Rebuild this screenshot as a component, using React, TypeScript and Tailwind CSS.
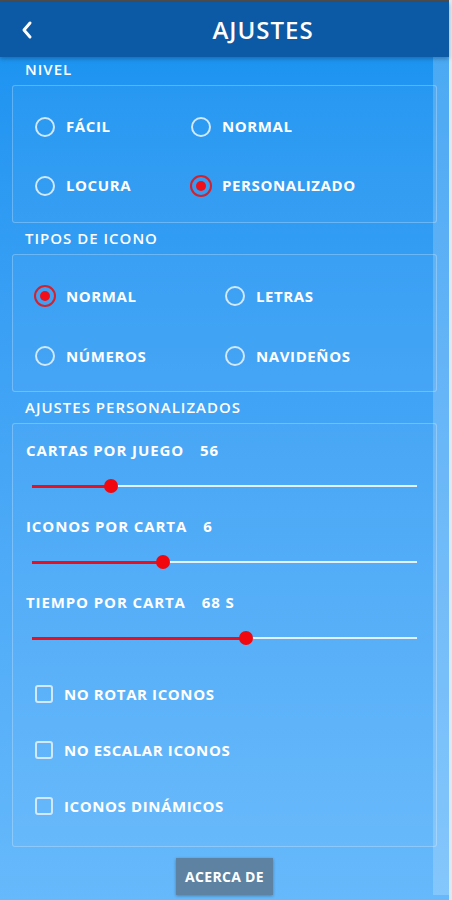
import React from "react";

const font = "font-['Open_Sans','Liberation_Sans',sans-serif]";

const Radio = ({ label, checked }: { label: string; checked?: boolean }) => (
  <div className="flex items-center gap-[11px]">
    {checked ? (
      <span className="flex h-[22px] w-[22px] items-center justify-center rounded-full border-2 border-[#d3222c] -mx-[1px]">
        <span className="h-[10px] w-[10px] rounded-full bg-[#f10f1a]" />
      </span>
    ) : (
      <span className="h-[20px] w-[20px] rounded-full border-2 border-[#d2e8fd]" />
    )}
    <span className="text-[15px] font-bold text-white tracking-[0.6px]">{label}</span>
  </div>
);

const SectionLabel = ({ children, first }: { children: string; first?: boolean }) => (
  <div className={`h-[24px] pl-[13px] mb-1 flex items-center text-[15px] font-semibold tracking-[1px] text-white ${first ? "" : "mt-[3px]"}`}>
    {children}
  </div>
);

const Slider = ({ label, value, pct }: { label: string; value: string; pct: number }) => (
  <div>
    <div className="h-[20px] flex items-center pl-[13px] text-[15px] font-bold tracking-[0.9px] text-white">
      <span>{label}</span>
      <span className="ml-[16px]">{value}</span>
    </div>
    <div className="relative mt-[16px] h-[20px] ml-[19px] mr-[19px] flex items-center">
      <div className="h-[2px] w-full bg-[#e3f1fd]" />
      <div className="absolute left-0 h-[3px] bg-[#e8101e]" style={{ width: `${pct}%` }} />
      <div
        className="absolute h-[14px] w-[14px] -ml-[7px] rounded-full bg-[#f2070f]"
        style={{ left: `${pct}%` }}
      />
    </div>
  </div>
);

const Check = ({ label }: { label: string }) => (
  <div className="h-[20px] flex items-center gap-[11px] pl-[22px]">
    <span className="h-[18px] w-[18px] rounded-[3px] border-2 border-[#d2e8fd]" />
    <span className="text-[15px] font-bold tracking-[0.6px] text-white">{label}</span>
  </div>
);

export default function App() {
  return (
    <div className={`flex h-[900px] w-[452px] overflow-hidden bg-[#dfe7ef] ${font}`}>
      <div className="relative flex w-[449px] flex-col">
        <div className="h-[2px] bg-[#4c4c4c]" />
        <div className="flex h-[55px] items-center bg-[#0c5aa6] shadow-[0_2px_4px_rgba(0,0,0,0.25)] z-10">
          <svg width="14" height="20" viewBox="0 0 14 20" className="ml-[20px]">
            <path d="M10 3 L4 10 L10 17" fill="none" stroke="white" strokeWidth="3" strokeLinecap="round" strokeLinejoin="round" />
          </svg>
          <div className="flex-1 pl-[43px] text-center text-[24px] font-semibold tracking-[1px] text-white">AJUSTES</div>
        </div>

        <div className="relative flex-1 bg-gradient-to-b from-[#1d94f1] to-[#66b9fb] px-3">
          <div className="absolute right-0 top-0 bottom-[5px] w-[16px] bg-white/20" />

          <SectionLabel first>NIVEL</SectionLabel>
          <div className="grid h-[138px] grid-cols-[156px_1fr] grid-rows-[59px_59px] content-start rounded-[3px] border border-white/25 bg-white/[0.03] pl-[22px] pt-[11px]">
            <Radio label="FÁCIL" />
            <Radio label="NORMAL" />
            <Radio label="LOCURA" />
            <Radio label="PERSONALIZADO" checked />
          </div>

          <SectionLabel>TIPOS DE ICONO</SectionLabel>
          <div className="grid h-[138px] grid-cols-[190px_1fr] grid-rows-[60px_60px] content-start rounded-[3px] border border-white/25 bg-white/[0.03] pl-[22px] pt-[11px]">
            <Radio label="NORMAL" checked />
            <Radio label="LETRAS" />
            <Radio label="NÚMEROS" />
            <Radio label="NAVIDEÑOS" />
          </div>

          <SectionLabel>AJUSTES PERSONALIZADOS</SectionLabel>
          <div className="h-[424px] rounded-[3px] border border-white/25 bg-white/[0.03] pt-[16px]">
            <div className="flex flex-col gap-[20px]">
              <Slider label="CARTAS POR JUEGO" value="56" pct={20.5} />
              <Slider label="ICONOS POR CARTA" value="6" pct={34} />
              <Slider label="TIEMPO POR CARTA" value="68 S" pct={55.7} />
            </div>
            <div className="mt-[36px] flex flex-col gap-[36px]">
              <Check label="NO ROTAR ICONOS" />
              <Check label="NO ESCALAR ICONOS" />
              <Check label="ICONOS DINÁMICOS" />
            </div>
          </div>

          <div className="mt-[11px] flex justify-center">
            <button className="h-[37px] w-[97px] bg-[#5d7d98]/90 text-[14px] font-bold tracking-[0.3px] text-white shadow-[0_1px_3px_rgba(0,0,0,0.3)]">
              ACERCA DE
            </button>
          </div>
        </div>
      </div>
    </div>
  );
}
